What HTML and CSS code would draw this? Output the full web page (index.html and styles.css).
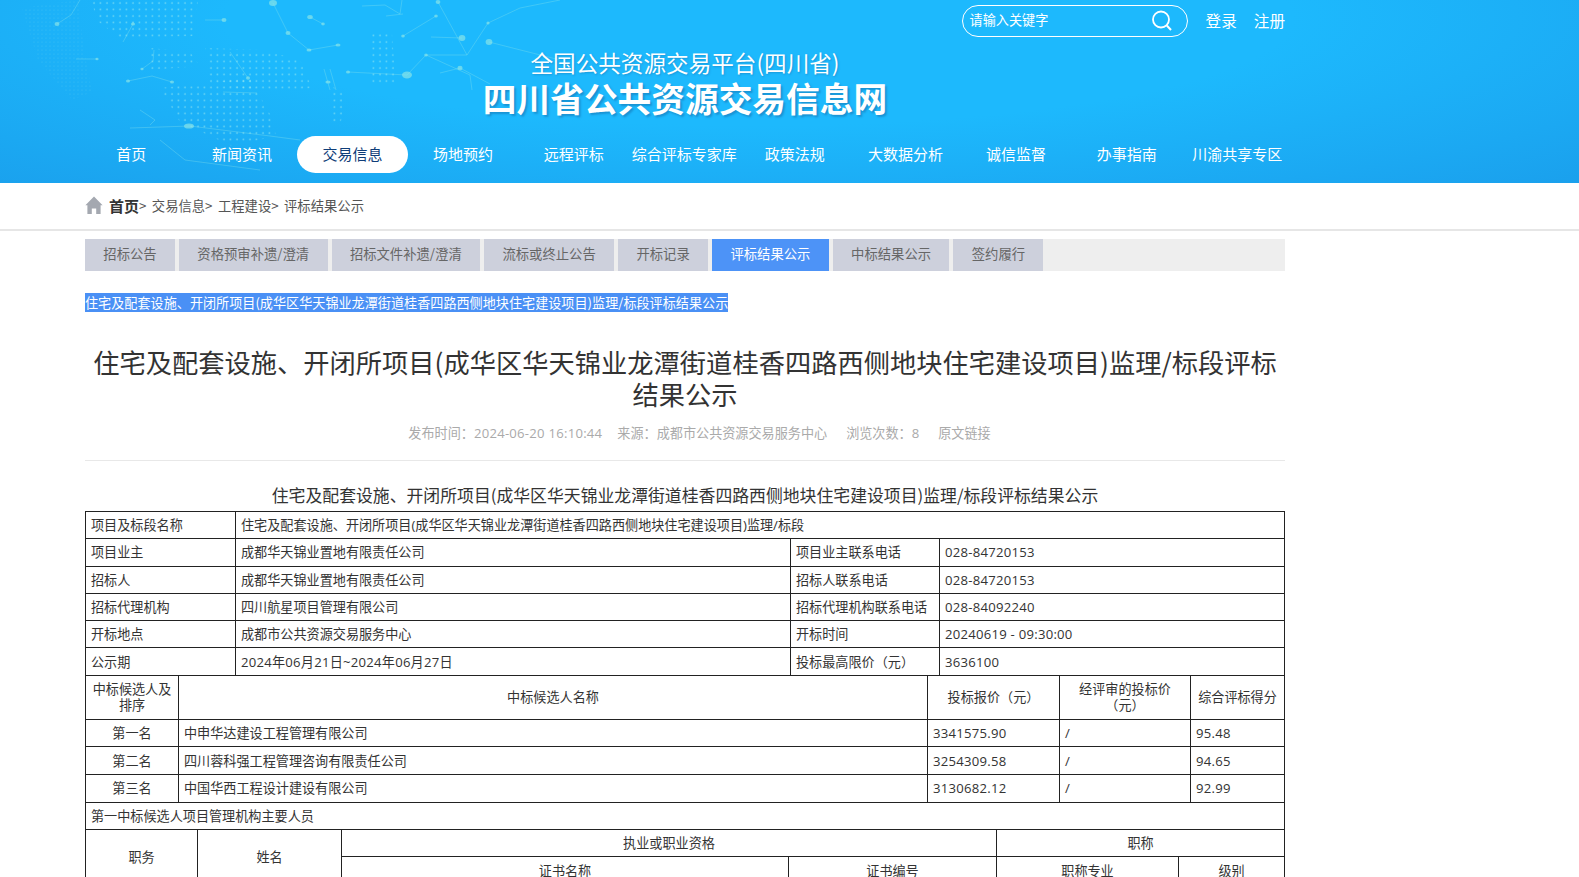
FILE: index.html
```html
<!DOCTYPE html>
<html lang="zh-CN">
<head>
  <meta charset="UTF-8">
  <title>四川省公共资源交易信息网</title>
  <link rel="stylesheet" href="styles.css">
</head>
<body>
<!-- 顶部 -->
<header class="header">
  <svg class="header-bg" width="560" height="183" viewBox="0 0 560 183">
    <defs>
      <pattern id="dots" width="6.5" height="6.5" patternUnits="userSpaceOnUse">
        <circle cx="3" cy="3" r="0.85" fill="#a0ecee" fill-opacity="0.6"/>
      </pattern>
      <pattern id="dotsFine" width="4" height="4" patternUnits="userSpaceOnUse">
        <circle cx="2" cy="2" r="0.6" fill="#a0ecee" fill-opacity="0.22"/>
      </pattern>
    </defs>
    <polygon fill="url(#dotsFine)" points="22,8 78,0 84,50 92,92 72,100 38,60"/>
    <polygon fill="url(#dots)" points="92,0 198,0 194,36 120,38 96,20"/>
    <polygon fill="url(#dots)" points="150,48 190,52 200,66 150,70"/>
    <polygon fill="url(#dots)" points="205,48 262,50 300,60 312,88 268,92 210,84"/>
    <polygon fill="url(#dots)" points="160,88 250,78 272,118 276,136 232,146 180,122"/>
    <polygon fill="url(#dots)" points="330,85 346,95 340,126 330,124"/>
    <polygon fill="url(#dots)" points="370,32 392,34 396,86 372,84"/>
    <g fill="none" stroke="#8fe6e8" stroke-opacity="0.32" stroke-width="1">
      <path d="M71,15 57,24M80,0 71,15"/>
      <path d="M273,3 288,33 309,50 338,45"/>
      <path d="M310,17 323,24"/>
      <path d="M133,24 123,42"/>
      <path d="M205,20 224,20"/>
      <path d="M142,69 153,61 154,50"/>
      <path d="M128,81 152,76 172,82"/>
      <path d="M230,52 248,78"/>
      <path d="M76,59 97,59"/>
      <path d="M223,92 257,93"/>
      <path d="M403,36 436,16"/>
      <path d="M362,6 385,5 400,14 402,0M386,16 403,14"/>
      <path d="M348,72 407,75 426,55 467,55 488,23"/>
      <path d="M438,2 467,55"/>
      <path d="M431,37 462,38"/>
      <path d="M426,55 470,75 472,90M440,73 460,68 490,84"/>
      <path d="M324,69 330,90M330,69 336,90"/>
      <path d="M140,110 155,120 150,125"/>
      <path d="M130,128 190,126 270,136 300,140"/>
      <path d="M160,140 185,160 260,170"/>
      <path d="M489,42 560,60M488,23 520,8 560,0"/>
    </g>
    <g fill="#8fe6e6" fill-opacity="0.65">
      <ellipse cx="273" cy="3" rx="4" ry="3"/>
      <ellipse cx="288" cy="33" rx="2.5" ry="2"/>
      <ellipse cx="309" cy="50" rx="2.5" ry="1.6"/>
      <ellipse cx="338" cy="45" rx="2.5" ry="1.6"/>
      <ellipse cx="310" cy="17" rx="2.8" ry="2"/>
      <ellipse cx="323" cy="24" rx="1.8" ry="1.4"/>
      <ellipse cx="57" cy="24" rx="2.5" ry="2"/>
      <ellipse cx="133" cy="24" rx="2" ry="1.6"/>
      <ellipse cx="224" cy="20" rx="2.5" ry="2"/>
      <ellipse cx="248" cy="78" rx="2" ry="1.8"/>
      <ellipse cx="172" cy="82" rx="2" ry="1.5"/>
      <ellipse cx="128" cy="81" rx="2" ry="1.5"/>
      <ellipse cx="142" cy="69" rx="1.6" ry="1.3"/>
      <ellipse cx="97" cy="59" rx="1.6" ry="1.3"/>
      <ellipse cx="189" cy="126" rx="5" ry="2.6"/>
      <ellipse cx="407" cy="75" rx="5" ry="3.4"/>
      <ellipse cx="348" cy="72" rx="2" ry="1.5"/>
      <ellipse cx="426" cy="55" rx="1.8" ry="1.5"/>
      <ellipse cx="462" cy="38" rx="3.4" ry="3"/>
      <ellipse cx="489" cy="42" rx="3.4" ry="3"/>
      <ellipse cx="488" cy="23" rx="1.6" ry="1.6"/>
      <ellipse cx="436" cy="16" rx="1.8" ry="1.6"/>
      <ellipse cx="438" cy="2" rx="2.4" ry="2"/>
      <ellipse cx="403" cy="36" rx="1.8" ry="1.5"/>
      <ellipse cx="460" cy="68" rx="2.6" ry="2.2"/>
      <ellipse cx="328" cy="82" rx="2.6" ry="1.6"/>
    </g>
  </svg>

  <div class="wrap header-inner">
    <div class="topbar">
      <div class="search">
        <span class="search-text">请输入关键字</span>
        <svg class="search-icon" width="24" height="24" viewBox="0 0 24 24">
          <circle cx="11" cy="10.5" r="8" fill="none" stroke="#fff" stroke-width="1.8"/>
          <path d="M16.8 16.5 21 21" fill="none" stroke="#fff" stroke-width="2"/>
        </svg>
      </div>
      <a class="toplink">登录</a>
      <a class="toplink">注册</a>
    </div>
    <div class="logo">
      <div class="logo-sub">全国公共资源交易平台(四川省)</div>
      <div class="logo-main">四川省公共资源交易信息网</div>
    </div>
    <nav class="nav">
      <a>首页</a>
      <a>新闻资讯</a>
      <a class="active">交易信息</a>
      <a>场地预约</a>
      <a>远程评标</a>
      <a>综合评标专家库</a>
      <a>政策法规</a>
      <a>大数据分析</a>
      <a>诚信监督</a>
      <a>办事指南</a>
      <a>川渝共享专区</a>
    </nav>
  </div>
</header>

<!-- 面包屑 -->
<div class="crumb">
  <div class="wrap crumb-inner">
    <svg class="home" width="18" height="18" viewBox="0 0 18 18">
      <path d="M9 0.5 17.6 9.2H15.6V18H11.2V12.4H6.8V18H2.4V9.2H0.4Z" fill="#a4a8b0"/>
    </svg>
    <b>首页</b><span>&gt;</span>
    <span class="crumb-item">交易信息&gt;</span>
    <span class="crumb-item">工程建设&gt;</span>
    <span class="crumb-item">评标结果公示</span>
  </div>
</div>

<main class="wrap">
  <div class="tabs">
    <a>招标公告</a>
    <a>资格预审补遗/澄清</a>
    <a>招标文件补遗/澄清</a>
    <a>流标或终止公告</a>
    <a>开标记录</a>
    <a class="active">评标结果公示</a>
    <a>中标结果公示</a>
    <a>签约履行</a>
  </div>

  <div class="picked"><span>住宅及配套设施、开闭所项目(成华区华天锦业龙潭街道桂香四路西侧地块住宅建设项目)监理/标段评标结果公示</span></div>

  <h1 class="title">住宅及配套设施、开闭所项目(成华区华天锦业龙潭街道桂香四路西侧地块住宅建设项目)监理/标段评标结果公示</h1>

  <div class="meta">
    <span>发布时间<i class="pun">：</i><span class="num">2024-06-20 16:10:44</span></span>
    <span>来源<i class="pun">：</i>成都市公共资源交易服务中心</span>
    <span>浏览次数<i class="pun">：</i>8</span>
    <span>原文链接</span>
  </div>

  <h2 class="table-title">住宅及配套设施、开闭所项目(成华区华天锦业龙潭街道桂香四路西侧地块住宅建设项目)监理/标段评标结果公示</h2>

  <table class="grid info">
    <colgroup><col class="c1"><col class="c2"><col class="c3"><col></colgroup>
    <tr><td>项目及标段名称</td><td colspan="3">住宅及配套设施、开闭所项目(成华区华天锦业龙潭街道桂香四路西侧地块住宅建设项目)监理/标段</td></tr>
    <tr><td>项目业主</td><td>成都华天锦业置地有限责任公司</td><td>项目业主联系电话</td><td class="num">028-84720153</td></tr>
    <tr><td>招标人</td><td>成都华天锦业置地有限责任公司</td><td>招标人联系电话</td><td class="num">028-84720153</td></tr>
    <tr><td>招标代理机构</td><td>四川航星项目管理有限公司</td><td>招标代理机构联系电话</td><td class="num">028-84092240</td></tr>
    <tr><td>开标地点</td><td>成都市公共资源交易服务中心</td><td>开标时间</td><td class="num">20240619 - 09:30:00</td></tr>
    <tr><td>公示期</td><td class="num">2024年06月21日~2024年06月27日</td><td>投标最高限价<i class="pun">（</i>元<i class="pun">）</i></td><td class="num">3636100</td></tr>
  </table>

  <table class="grid result">
    <colgroup><col class="c1"><col class="c2"><col class="c3"><col class="c4"><col></colgroup>
    <tr class="head">
      <td class="mid">中标候选人及排序</td><td class="mid">中标候选人名称</td><td class="mid">投标报价<i class="pun">（</i>元<i class="pun">）</i></td><td class="mid">经评审的投标价<i class="pun">（</i>元<i class="pun">）</i></td><td class="mid">综合评标得分</td>
    </tr>
    <tr><td class="mid">第一名</td><td>中申华达建设工程管理有限公司</td><td class="num">3341575.90</td><td>/</td><td class="num">95.48</td></tr>
    <tr><td class="mid">第二名</td><td>四川蓉科强工程管理咨询有限责任公司</td><td class="num">3254309.58</td><td>/</td><td class="num">94.65</td></tr>
    <tr><td class="mid">第三名</td><td>中国华西工程设计建设有限公司</td><td class="num">3130682.12</td><td>/</td><td class="num">92.99</td></tr>
    <tr><td colspan="5">第一中标候选人项目管理机构主要人员</td></tr>
  </table>

  <table class="grid staff">
    <colgroup><col class="c1"><col class="c2"><col class="c3"><col class="c4"><col class="c5"><col></colgroup>
    <tr>
      <td class="mid" rowspan="2">职务</td><td class="mid" rowspan="2">姓名</td>
      <td class="mid" colspan="2">执业或职业资格</td><td class="mid" colspan="2">职称</td>
    </tr>
    <tr><td class="mid">证书名称</td><td class="mid">证书编号</td><td class="mid">职称专业</td><td class="mid">级别</td></tr>
  </table>
</main>
</body>
</html>
```
FILE: styles.css
```css
html, body {
  margin: 0;
  height: 877px;
  overflow: hidden;
}
body {
  font-family: "Noto Sans CJK SC", sans-serif;
  font-size: 13.12px;
  color: #333;
  background: #fff;
}
.wrap {
  width: 1200px;
  margin-left: 85px;
}
/* 全角标点居中 */
.pun {
  font-family: "Noto Sans CJK TC", sans-serif;
  font-style: normal;
}
.num {
  letter-spacing: 0.25px;
}

/* 顶部 */
.header {
  position: relative;
  height: 183px;
  background: radial-gradient(ellipse 75% 130% at 48% 10%, #1db9fd 45%, #1a9fec 100%);
  color: #fff;
}
.header-bg {
  position: absolute;
  top: 0;
  left: 0;
}
.header-inner {
  position: relative;
}
.topbar {
  display: flex;
  justify-content: flex-end;
  align-items: center;
  padding-top: 5px;
  height: 32px;
}
.search {
  display: flex;
  justify-content: space-between;
  align-items: center;
  box-sizing: border-box;
  width: 226px;
  height: 32px;
  padding: 0 13px 0 7px;
  margin-right: 18px;
  border: 1px solid #fff;
  border-radius: 16px;
}
.search-text {
  padding-bottom: 3px;
}
.toplink {
  font-size: 15.6px;
  padding-bottom: 3px;
}
.toplink + .toplink {
  margin-left: 17px;
}
.logo {
  margin-top: 11px;
  text-align: center;
}
.logo-sub {
  font-size: 22.6px;
  line-height: 30px;
  text-shadow: 1px 1px 2px rgba(20, 90, 150, 0.35);
}
.logo-main {
  font-size: 33.7px;
  font-weight: 700;
  line-height: 40px;
  text-shadow: 2px 2px 2px rgba(20, 90, 150, 0.4);
}
.nav {
  display: grid;
  grid-template-columns: repeat(11, 110.6px);
  margin: 18px 0 0 -9px;
}
.nav a {
  height: 37px;
  line-height: 35px;
  text-align: center;
  font-size: 15px;
  white-space: nowrap;
}
.nav a.active {
  background: #fff;
  color: #0f3d78;
  border-radius: 19px;
}

/* 面包屑 */
.crumb {
  height: 46px;
  border-bottom: 2px solid #e6e6e6;
}
.crumb-inner {
  display: flex;
  align-items: center;
  height: 44px;
  font-size: 13.33px;
  color: #555;
}
.home {
  margin-right: 6px;
}
.crumb b {
  font-size: 15px;
  color: #333;
}
.crumb-item {
  margin-left: 5.4px;
}

/* 栏目 */
.tabs {
  display: flex;
  gap: 4px;
  height: 32px;
  margin-top: 8px;
  background: #eee;
  font-size: 13.33px;
}
.tabs a {
  padding: 0 18.35px;
  line-height: 30px;
  background: #cdd0dc;
  color: #666;
}
.tabs a.active {
  background: #4d93f7;
  color: #fff;
}
.picked {
  margin-top: 23px;
  height: 17px;
  line-height: 17px;
}
.picked span {
  background: #4a90f5;
  color: #fff;
}
.title {
  margin: 35px 0 0;
  font-size: 26.27px;
  font-weight: 400;
  line-height: 32px;
  text-align: center;
  color: #333;
}
.meta {
  display: flex;
  justify-content: center;
  gap: 19px;
  margin-top: 9px;
  height: 28px;
  padding: 0 0 13px 29px;
  line-height: 28px;
  font-family: "Open Sans", "Noto Sans CJK SC", sans-serif;
  color: #aaa;
  border-bottom: 1px solid #e8e8e8;
}
.meta > span:first-child {
  margin-right: -4px;
}
.table-title {
  margin: 22px 0 0;
  font-size: 16.85px;
  font-weight: 400;
  line-height: 24px;
  height: 28px;
  text-align: center;
}

/* 表格 */
.grid {
  width: 1200px;
  table-layout: fixed;
  border-collapse: collapse;
  font-family: "Open Sans", "Noto Sans CJK SC", sans-serif;
  color: #333;
}
.grid + .grid {
  margin-top: -1px;
}
.grid td {
  box-sizing: border-box;
  height: 27.3px;
  padding: 0 5px;
  border: 1px solid #222;
  line-height: 16px;
  overflow: hidden;
}
.grid td.mid {
  text-align: center;
}
.grid .head td {
  height: 44px;
}
.result td {
  height: 27.6px;
}
.info .c1 { width: 150px; }
.info .c2 { width: 555px; }
.info .c3 { width: 149px; }
.result .c1 { width: 93px; }
.result .c2 { width: 749px; }
.result .c3 { width: 132px; }
.result .c4 { width: 131px; }
.staff .c1 { width: 112px; }
.staff .c2 { width: 144px; }
.staff .c3 { width: 447px; }
.staff .c4 { width: 208px; }
.staff .c5 { width: 182px; }
```
